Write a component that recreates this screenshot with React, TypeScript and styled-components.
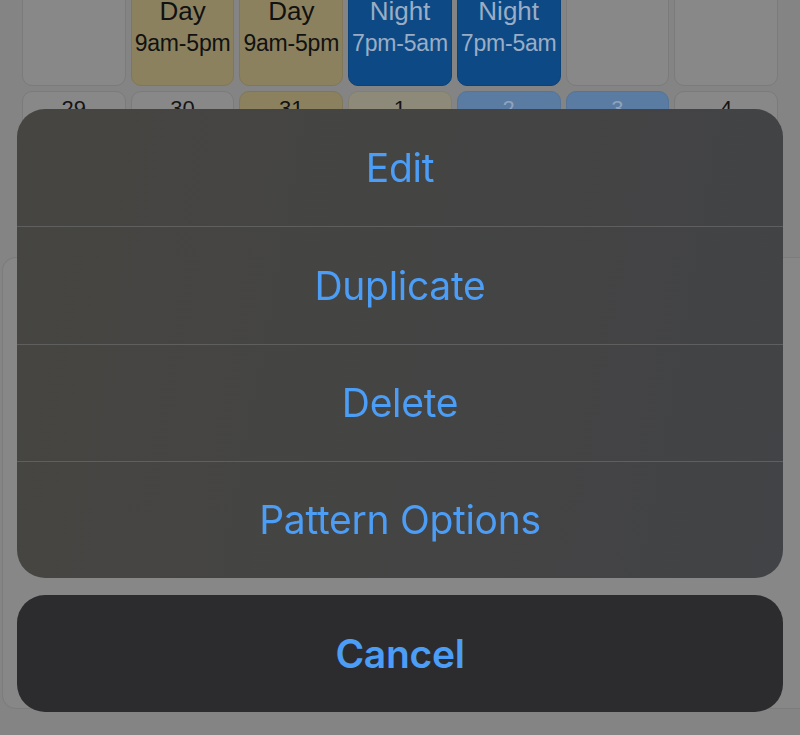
import React from 'react';
import styled, { createGlobalStyle } from 'styled-components';

const GlobalStyle = createGlobalStyle`
	html, body {
		margin: 0;
		padding: 0;
		height: 100%;
		overflow: hidden;
		background: #848484;
	}
	#root {
		height: 100%;
	}
`;

type Tone = 'empty' | 'day' | 'dayLight' | 'night' | 'nightLight';

const tones: Record<Tone, { bg: string; border: string; color: string }> = {
	empty: { bg: '#888888', border: '#7b7b7b', color: '#151515' },
	day: { bg: '#8b815f', border: '#80775a', color: '#111111' },
	dayLight: { bg: '#8d8a79', border: '#83806f', color: '#151515' },
	night: { bg: '#0d4a85', border: '#0b4379', color: '#9badc4' },
	nightLight: { bg: '#5a7ba2', border: '#557497', color: '#8fa3bc' },
};

const Page = styled.div`
	height: 100%;
	font-family: 'Liberation Sans', Arial, sans-serif;
`;

const Calendar = styled.div`
	margin-top: -20px;
	padding: 0 22px;
	display: flex;
	flex-direction: column;
	gap: 5px;
`;

const Week = styled.div`
	display: grid;
	grid-template-columns: repeat(7, 1fr);
	gap: 5px;
`;

const Cell = styled.div<{ $tone: Tone; $tall?: boolean }>`
	height: ${(p) => (p.$tall ? '106px' : '100px')};
	box-sizing: border-box;
	border-radius: 10px;
	background: ${(p) => tones[p.$tone].bg};
	border: 1px solid ${(p) => tones[p.$tone].border};
	color: ${(p) => tones[p.$tone].color};
	display: flex;
	flex-direction: column;
	align-items: center;
	padding-top: ${(p) => (p.$tall ? '15px' : '5px')};
`;

const ShiftName = styled.div`
	font-size: 26px;
	line-height: 30px;
`;

const ShiftTime = styled.div`
	font-size: 23px;
	line-height: 26px;
	margin-top: 4px;
	letter-spacing: -0.2px;
`;

const DateNum = styled.div`
	font-size: 22px;
	line-height: 24px;
`;

const BackCard = styled.div`
	margin: 66px 0 0 2px;
	height: 450px;
	border-radius: 14px 0 0 14px;
	background: #878787;
	border: 1px solid #7c7c7c;
	border-right: none;
`;

const Overlay = styled.div`
	position: fixed;
	inset: 0;
	display: flex;
	flex-direction: column;
	justify-content: flex-end;
	gap: 17px;
	padding: 0 17px 23px;
	font-family: Inter, 'Noto Sans', sans-serif;
`;

const ActionGroup = styled.div`
	border-radius: 28px;
	overflow: hidden;
	background: linear-gradient(100deg, #464541 0%, #444444 55%, #424346 100%);
	display: flex;
	flex-direction: column;
`;

const ActionButton = styled.div<{ $bold?: boolean }>`
	height: 117.25px;
	box-sizing: border-box;
	display: flex;
	align-items: center;
	justify-content: center;
	color: #4c9df6;
	font-size: 39px;
	font-weight: ${(p) => (p.$bold ? 600 : 400)};
	letter-spacing: -0.3px;
	& + & {
		border-top: 1px solid #5f5f5f;
	}
`;

const CancelButton = styled(ActionButton)`
	height: 117px;
	border-radius: 28px;
	background: #2c2c2e;
`;

const topRow: { tone: Tone; name?: string; time?: string }[] = [
	{ tone: 'empty' },
	{ tone: 'day', name: 'Day', time: '9am-5pm' },
	{ tone: 'day', name: 'Day', time: '9am-5pm' },
	{ tone: 'night', name: 'Night', time: '7pm-5am' },
	{ tone: 'night', name: 'Night', time: '7pm-5am' },
	{ tone: 'empty' },
	{ tone: 'empty' },
];

const dateRow: { tone: Tone; day: string }[] = [
	{ tone: 'empty', day: '29' },
	{ tone: 'empty', day: '30' },
	{ tone: 'day', day: '31' },
	{ tone: 'dayLight', day: '1' },
	{ tone: 'nightLight', day: '2' },
	{ tone: 'nightLight', day: '3' },
	{ tone: 'empty', day: '4' },
];

const actions = ['Edit', 'Duplicate', 'Delete', 'Pattern Options'];

const App = () => {
	return (
		<Page>
			<GlobalStyle />
			<Calendar>
				<Week>
					{topRow.map((c, i) => (
						<Cell key={i} $tone={c.tone} $tall>
							{c.name && <ShiftName>{c.name}</ShiftName>}
							{c.time && <ShiftTime>{c.time}</ShiftTime>}
						</Cell>
					))}
				</Week>
				<Week>
					{dateRow.map((c, i) => (
						<Cell key={i} $tone={c.tone}>
							<DateNum>{c.day}</DateNum>
						</Cell>
					))}
				</Week>
			</Calendar>
			<BackCard />
			<Overlay>
				<ActionGroup>
					{actions.map((a) => (
						<ActionButton key={a}>{a}</ActionButton>
					))}
				</ActionGroup>
				<CancelButton $bold>Cancel</CancelButton>
			</Overlay>
		</Page>
	);
};

export default App;
